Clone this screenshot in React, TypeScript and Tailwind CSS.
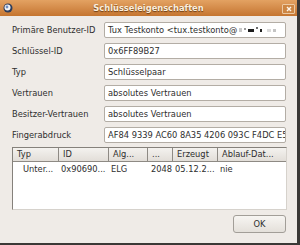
import React from 'react';

const FIELDS: { label: string; value: React.ReactNode }[] = [
  { label: 'Primäre Benutzer-ID', value: null },
  { label: 'Schlüssel-ID', value: '0x6FF89B27' },
  { label: 'Typ', value: 'Schlüsselpaar' },
  { label: 'Vertrauen', value: 'absolutes Vertrauen' },
  { label: 'Besitzer-Vertrauen', value: 'absolutes Vertrauen' },
  { label: 'Fingerabdruck', value: 'AF84 9339 AC60 8A35 4206 093C F4DC E5F7' },
];

const COLUMNS = [
  { title: 'Typ', w: 'w-[46px]', cell: 'Unter...', pad: 'pl-[10px]' },
  { title: 'ID', w: 'w-[50px]', cell: '0x90690...', pad: 'pl-[2px]' },
  { title: 'Alg...', w: 'w-[39px]', cell: 'ELG', pad: 'pl-[2px]' },
  { title: '...', w: 'w-[25px]', cell: '2048', pad: 'pl-[3px]' },
  { title: 'Erzeugt', w: 'w-[45px]', cell: '05.12.2...', pad: 'pl-[2px]' },
  { title: 'Ablauf-Dat...', w: 'flex-1', cell: 'nie', pad: 'pl-[2px]' },
];

// blurred e-mail domain, just grey blocks like in the screenshot
const Censored = () => (
  <span className="inline-flex items-center gap-[2px] ml-[2px]">
    <span className="w-[3px] h-[4px] bg-[#c9c9c9]" />
    <span className="w-[2px] h-[2px] bg-[#9a9a9a] -mt-[3px]" />
    <span className="w-[6px] h-[3px] bg-[#1d1d1d]" />
    <span className="w-[2px] h-[2px] bg-[#6d6d6d] -mt-[4px]" />
    <span className="w-[2px] h-[3px] bg-[#222]" />
    <span className="w-[4px] h-[3px] bg-[#dadada] ml-[3px]" />
    <span className="w-[3px] h-[3px] bg-[#c4c4c4]" />
  </span>
);

export default function App() {
  return (
    <div className="w-[300px] h-[245px] bg-[#3a3836] overflow-hidden font-['DejaVu_Sans',sans-serif] text-[8.3px] text-[#2e2e2e]">
      <div className="w-[297px] h-[243px] bg-[#efebe7] flex flex-col">
        {/* Title bar */}
        <div className="h-[16px] shrink-0 bg-gradient-to-b from-[#e3a262] to-[#c5752f] flex items-center relative">
          <div className="absolute left-[3px] top-[3px]">
            <svg width="10" height="10" viewBox="0 0 10 10">
              <circle cx="5" cy="5" r="4.5" fill="#2d3d5c" />
              <circle cx="4.5" cy="4.5" r="3" fill="#f3f3f3" />
              <circle cx="4" cy="4" r="1.4" fill="#6e8cc0" />
            </svg>
          </div>
          <div className="flex-1 text-center font-bold text-[#fbeedd] [text-shadow:0_1px_1px_#6b3c14]">
            Schlüsseleigenschaften
          </div>
          <div className="absolute right-[2px] top-[4px] w-[13px] h-[10px] border border-[#ecc9a2] bg-[#cd8643] flex items-center justify-center rounded-[1px]">
            <svg width="6" height="6" viewBox="0 0 6 6">
              <path d="M1 1 L5 5 M5 1 L1 5" stroke="#fff6ea" strokeWidth="1.4" />
            </svg>
          </div>
        </div>

        {/* Fields */}
        <div className="pl-[12px] pr-[11px] pt-[6px] flex flex-col gap-[5px]">
          {FIELDS.map((f, i) => (
            <div key={f.label} className="flex items-center">
              <div className="w-[92px] shrink-0 whitespace-nowrap">{f.label}</div>
              <div className="flex-1 h-[16px] bg-white border border-[#b3ada5] rounded-[2px] px-[3px] flex items-center whitespace-nowrap overflow-hidden">
                {i === 0 ? (
                  <>
                    <span>Tux Testkonto &lt;tux.testkonto@</span>
                    <Censored />
                  </>
                ) : (
                  f.value
                )}
              </div>
            </div>
          ))}
        </div>

        {/* Subkey table */}
        <div className="ml-[12px] mr-[10px] mt-[4px] h-[63px] bg-white border-t border-l border-[#85817b] border-r border-b border-r-[#d6d2cc] border-b-[#d6d2cc] flex flex-col">
          <div className="h-[14px] flex bg-gradient-to-b from-[#f4f2ef] to-[#e2ded8] border-b border-[#8e8a84]">
            {COLUMNS.map((c, i) => (
              <div
                key={c.title}
                className={`${c.w} shrink-0 h-full flex items-center pl-[4px] whitespace-nowrap overflow-hidden ${i < COLUMNS.length - 1 ? 'border-r border-[#8e8a84]' : ''}`}
              >
                {c.title}
              </div>
            ))}
          </div>
          <div className="h-[14px] flex">
            {COLUMNS.map((c) => (
              <div key={c.title} className={`${c.w} shrink-0 h-full flex items-center ${c.pad} whitespace-nowrap overflow-hidden`}>
                {c.cell}
              </div>
            ))}
          </div>
        </div>

        {/* Buttons */}
        <div className="flex justify-end pr-[11px] mt-[5px]">
          <button className="w-[53px] h-[18px] rounded-[3px] border border-[#a29e98] bg-gradient-to-b from-[#f7f5f2] to-[#e4e0da] flex items-center justify-center text-[#2e2e2e]">
            OK
          </button>
        </div>
      </div>
    </div>
  );
}
